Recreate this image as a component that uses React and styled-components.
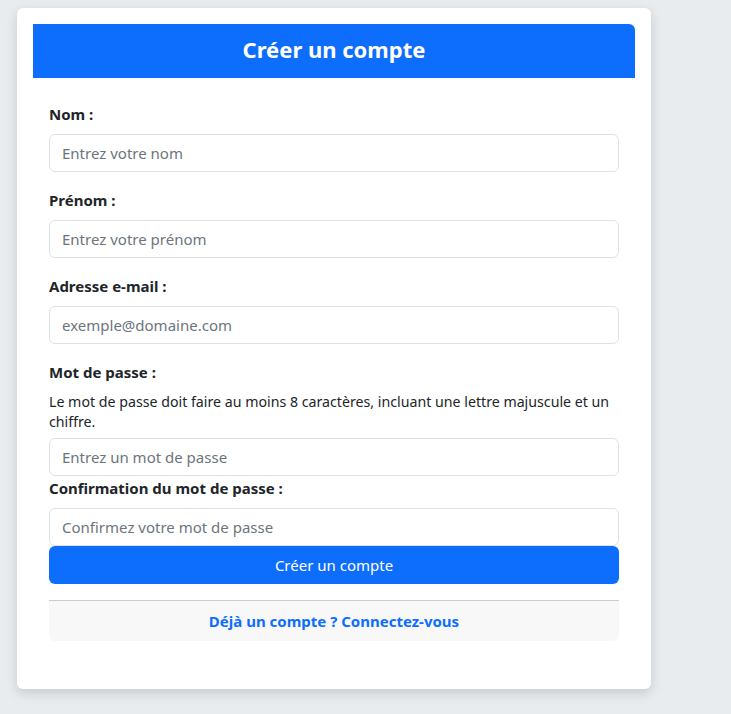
import styled, { createGlobalStyle } from 'styled-components'

const GlobalStyle = createGlobalStyle`
  html, body {
    margin: 0;
    background: #e9ecef;
    font-family: "Noto Sans", "Open Sans", sans-serif;
    color: #212529;
  }
`

const Page = styled.div`
  min-height: 714px;
  padding: 8px 0 24px 17px;
  box-sizing: border-box;
`

const Card = styled.div`
  width: 634px;
  box-sizing: border-box;
  background: #fff;
  border-radius: 6px;
  box-shadow: 0 4px 12px rgba(0, 0, 0, 0.15);
  padding: 16px 16px 48px;
`

const Header = styled.div`
  background: #0d6efd;
  color: #fff;
  height: 54px;
  box-sizing: border-box;
  padding-bottom: 5px;
  display: flex;
  align-items: center;
  justify-content: center;
  border-radius: 0 6px 0 0;
`

const Title = styled.h1`
  margin: 0;
  font-size: 22px;
  font-weight: 700;
`

const Body = styled.form`
  display: flex;
  flex-direction: column;
  padding: 24px 16px 0;
`

const Group = styled.div`
  display: flex;
  flex-direction: column;
  margin-bottom: ${p => (p.$tight ? '0' : '16px')};
`

const Label = styled.label`
  font-weight: 700;
  font-size: 15px;
  line-height: 24px;
  margin-bottom: 8px;
`

const Hint = styled.p`
  margin: 0 0 7px;
  font-size: 14.2px;
  line-height: 19.5px;
  color: #212529;
`

const Input = styled.input`
  height: 38px;
  box-sizing: border-box;
  border: 1px solid #dee2e6;
  border-radius: 6px;
  padding: 6px 12px;
  font-family: inherit;
  font-size: 15px;
  color: #212529;
  &::placeholder {
    color: #6c757d;
  }
`

const Submit = styled.button`
  height: 38px;
  border: none;
  border-radius: 6px;
  background: #0d6efd;
  color: #fff;
  font-family: inherit;
  font-size: 15px;
  cursor: pointer;
`

const Footer = styled.div`
  margin-top: 16px;
  border-top: 1px solid #c8cbcf;
  background: #f8f8f8;
  border-radius: 0 0 6px 6px;
  height: 40px;
  display: flex;
  align-items: center;
  justify-content: center;
`

const LoginLink = styled.a`
  color: #0d6efd;
  font-weight: 700;
  font-size: 15px;
  text-decoration: none;
  cursor: pointer;
`

const App = () => {
  return (
    <>
      <GlobalStyle />
      <Page>
        <Card>
          <Header>
            <Title>Créer un compte</Title>
          </Header>
          <Body onSubmit={e => e.preventDefault()}>
            <Group>
              <Label>Nom :</Label>
              <Input placeholder="Entrez votre nom" />
            </Group>
            <Group>
              <Label>Prénom :</Label>
              <Input placeholder="Entrez votre prénom" />
            </Group>
            <Group>
              <Label>Adresse e-mail :</Label>
              <Input type="email" placeholder="exemple@domaine.com" />
            </Group>
            <Group $tight>
              <Label>Mot de passe :</Label>
              <Hint>
                Le mot de passe doit faire au moins 8 caractères, incluant une lettre majuscule et un chiffre.
              </Hint>
              <Input type="password" placeholder="Entrez un mot de passe" />
            </Group>
            <Group $tight>
              <Label>Confirmation du mot de passe :</Label>
              <Input type="password" placeholder="Confirmez votre mot de passe" />
            </Group>
            <Submit type="submit">Créer un compte</Submit>
            <Footer>
              <LoginLink>Déjà un compte ? Connectez-vous</LoginLink>
            </Footer>
          </Body>
        </Card>
      </Page>
    </>
  )
}

export default App
